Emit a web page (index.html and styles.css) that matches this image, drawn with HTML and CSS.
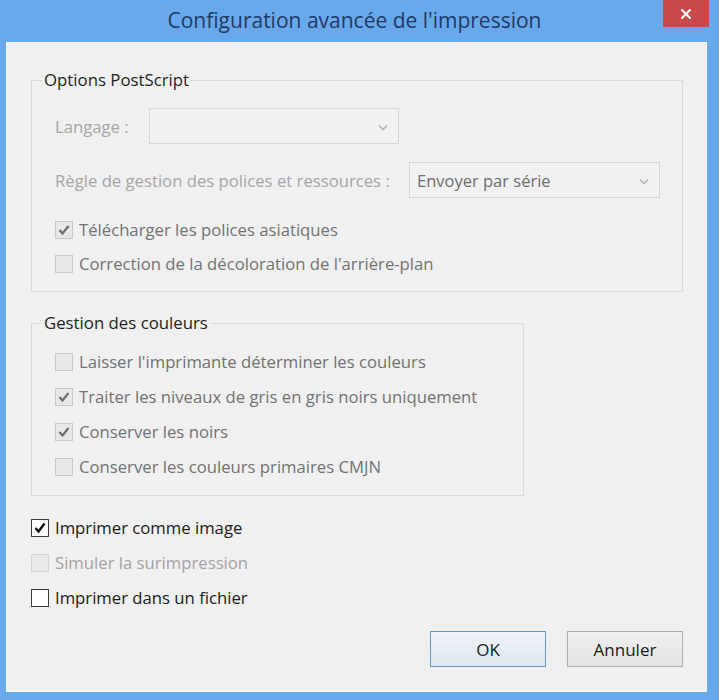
FILE: index.html
```html
<!DOCTYPE html>
<html lang="fr">
<head>
<meta charset="utf-8">
<title>Configuration avancée de l'impression</title>
<link rel="stylesheet" href="styles.css">
</head>
<body>
<div class="window">
  <div class="titlebar">
    <div class="title">Configuration avancée de l'impression</div>
    <div class="close"><svg width="12" height="12" viewBox="0 0 12 12"><path d="M1.5 1.5 L10.5 10.5 M10.5 1.5 L1.5 10.5" stroke="#fff" stroke-width="2" fill="none"/></svg></div>
  </div>
  <div class="panel">
    <fieldset class="group g1">
      <legend>Options PostScript</legend>
      <div class="inner">
        <div class="field-row r1">
          <span class="lbl lbl1">Langage :</span>
          <div class="select s1"><span class="val"></span><svg class="chev" width="10" height="7" viewBox="0 0 10 7"><path d="M1 1.5 L5 5.5 L9 1.5" stroke="#b4b4b4" stroke-width="1.6" fill="none"/></svg></div>
        </div>
        <div class="field-row r2">
          <span class="lbl lbl2">Règle de gestion des polices et ressources :</span>
          <div class="select s2"><span class="val">Envoyer par série</span><svg class="chev" width="10" height="7" viewBox="0 0 10 7"><path d="M1 1.5 L5 5.5 L9 1.5" stroke="#b4b4b4" stroke-width="1.6" fill="none"/></svg></div>
        </div>
        <div class="check dis first">
          <span class="box"><svg width="16" height="16" viewBox="0 0 16 16"><path d="M3.5 8 L6.5 11.5 L12.5 4" stroke="#6e6e6e" stroke-width="2.2" fill="none"/></svg></span>
          <span class="txt">Télécharger les polices asiatiques</span>
        </div>
        <div class="check dis">
          <span class="box"></span>
          <span class="txt">Correction de la décoloration de l'arrière-plan</span>
        </div>
      </div>
    </fieldset>

    <fieldset class="group g2">
      <legend>Gestion des couleurs</legend>
      <div class="inner">
        <div class="check dis row35 first2">
          <span class="box"></span>
          <span class="txt">Laisser l'imprimante déterminer les couleurs</span>
        </div>
        <div class="check dis row35">
          <span class="box"><svg width="16" height="16" viewBox="0 0 16 16"><path d="M3.5 8 L6.5 11.5 L12.5 4" stroke="#6e6e6e" stroke-width="2.2" fill="none"/></svg></span>
          <span class="txt">Traiter les niveaux de gris en gris noirs uniquement</span>
        </div>
        <div class="check dis row35">
          <span class="box"><svg width="16" height="16" viewBox="0 0 16 16"><path d="M3.5 8 L6.5 11.5 L12.5 4" stroke="#6e6e6e" stroke-width="2.2" fill="none"/></svg></span>
          <span class="txt">Conserver les noirs</span>
        </div>
        <div class="check dis row35">
          <span class="box"></span>
          <span class="txt">Conserver les couleurs primaires CMJN</span>
        </div>
      </div>
    </fieldset>

    <div class="bottom-checks">
      <div class="check on row35">
        <span class="box"><svg width="16" height="16" viewBox="0 0 16 16"><path d="M3.5 8 L6.5 11.5 L12.5 3.5" stroke="#111" stroke-width="2.4" fill="none"/></svg></span>
        <span class="txt">Imprimer comme image</span>
      </div>
      <div class="check faint row35">
        <span class="box"></span>
        <span class="txt">Simuler la surimpression</span>
      </div>
      <div class="check on row35">
        <span class="box"></span>
        <span class="txt">Imprimer dans un fichier</span>
      </div>
    </div>

    <div class="buttons">
      <div class="btn ok">OK</div>
      <div class="btn">Annuler</div>
    </div>
  </div>
</div>
</body>
</html>
```

FILE: styles.css
```css
html, body {
  margin: 0;
  padding: 0;
}
body {
  background: #6aa8ec;
  font-family: "Open Sans", "Noto Sans", "DejaVu Sans", sans-serif;
  width: 719px;
  height: 700px;
  overflow: hidden;
}
.window {
  width: 719px;
  height: 700px;
  display: flex;
  flex-direction: column;
}
.titlebar {
  height: 42px;
  display: flex;
  align-items: flex-start;
}
.title {
  flex: 1;
  padding-left: 46px;
  text-align: center;
  font-size: 21px;
  line-height: 40px;
  color: #1d3b64;
  white-space: nowrap;
}
.close {
  width: 46px;
  height: 27px;
  background: #c9494b;
  margin-right: 10px;
  display: flex;
  align-items: center;
  justify-content: center;
}
.panel {
  background: #f0f0f0;
  margin: 0 12px 0 6px;
  padding: 0 24px 25px 25px;
  display: flex;
  flex-direction: column;
  box-shadow: inset 0 0 0 1px #f6f8fb;
}
.group {
  margin: 0;
  border: 1px solid #d9d9d9;
  padding: 0 0 0 10px;
  min-width: 0;
}
.group legend {
  padding: 0 2px;
  font-size: 16.8px;
  line-height: 20px;
  color: #1e1e1e;
}
.g1 {
  margin-top: 28px;
  padding-bottom: 10px;
}
.g2 {
  margin-top: 21px;
  width: 481px;
  padding-bottom: 11px;
}
.inner {
  padding-left: 13px;
  display: flex;
  flex-direction: column;
}
.field-row {
  display: flex;
  align-items: center;
  height: 36px;
  margin-top: 18px;
}
.lbl {
  font-size: 16.7px;
  color: #a6a6a6;
  white-space: nowrap;
}
.lbl1 { width: 94px; }
.lbl2 { width: 354px; }
.select {
  box-sizing: border-box;
  height: 36px;
  border: 1px solid #d6d6d6;
  background: #f1f1f1;
  display: flex;
  align-items: center;
  justify-content: space-between;
  padding: 0 10px 0 7px;
}
.s1 { width: 250px; }
.s2 { width: 251px; }
.val {
  font-size: 16.5px;
  color: #6e6e6e;
}
.chev { margin-top: 2px; }
.check {
  display: flex;
  align-items: center;
  height: 34px;
}
.check.first { margin-top: 15px; }
.check.row35 { height: 35px; }
.check.first2 { margin-top: 11px; }
.box {
  box-sizing: border-box;
  width: 18px;
  height: 18px;
  margin-right: 6px;
  display: flex;
  align-items: center;
  justify-content: center;
  flex: none;
}
.txt {
  font-size: 16.7px;
  line-height: 22px;
  white-space: nowrap;
}
.dis .box {
  border: 1px solid #c8c8c8;
  background: #e8e8e8;
}
.dis .txt { color: #727272; }
.on .box {
  border: 1px solid #3a3a3a;
  background: #ffffff;
}
.on .txt { color: #1a1a1a; }
.faint .box {
  border: 1px solid #d4d4d4;
  background: #e9e9e9;
}
.faint .txt { color: #a3a3a3; }
.bottom-checks {
  margin-top: 14px;
  display: flex;
  flex-direction: column;
}
.buttons {
  margin-top: 16px;
  display: flex;
  justify-content: flex-end;
  gap: 21px;
}
.btn {
  box-sizing: border-box;
  width: 116px;
  height: 36px;
  border: 1px solid #adadad;
  background: linear-gradient(#f0f0f0, #e3e3e3);
  display: flex;
  align-items: center;
  justify-content: center;
  font-size: 17px;
  color: #1a1a1a;
}
.btn.ok {
  border-color: #5d9bd6;
  background: linear-gradient(#eef3f8, #e0e7ef);
}
```
